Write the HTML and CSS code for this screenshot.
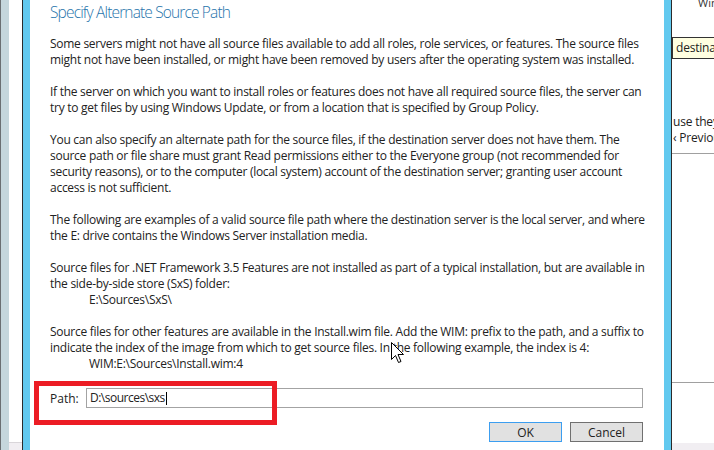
FILE: index.html
```html
<!DOCTYPE html>
<html>
<head>
	<title>Specify Alternate Source Path</title>
	<link rel="stylesheet" href="styles.css">
</head>
<body>
<div class="desk">
	<div class="edge">
		<div class="edge-line"></div>
		<div class="edge-fill"></div>
		<div class="edge-gap"><div class="edge-foot"></div></div>
	</div>
	<div class="dialog">
		<div class="dialog-body">
			<div class="title">Specify Alternate Source Path</div>
			<div class="text">
				<p>Some servers might not have all source files available to add all roles, role services, or features. The source files<br>might not have been installed, or might have been removed by users after the operating system was installed.</p>
				<p>If the server on which you want to install roles or features does not have all required source files, the server can<br>try to get files by using Windows Update, or from a location that is specified by Group Policy.</p>
				<p>You can also specify an alternate path for the source files, if the destination server does not have them. The<br>source path or file share must grant Read permissions either to the Everyone group (not recommended for<br>security reasons), or to the computer (local system) account of the destination server; granting user account<br>access is not sufficient.</p>
				<p>The following are examples of a valid source file path where the destination server is the local server, and where<br>the E: drive contains the Windows Server installation media.</p>
				<p>Source files for .NET Framework 3.5 Features are not installed as part of a typical installation, but are available in<br>the side-by-side store (SxS) folder:<br><span class="indent">E:\Sources\SxS\</span></p>
				<p>Source files for other features are available in the Install.wim file. Add the WIM: prefix to the path, and a suffix to<br>indicate the index of the image from which to get source files. In the following example, the index is 4:<br><span class="indent">WIM:E:\Sources\Install.wim:4</span></p>
			</div>
			<div class="path-row">
				<span class="path-label">Path:</span>
				<div class="path-input">D:\sources\sxs<span class="caret"></span></div>
			</div>
			<div class="buttons">
				<button type="button" class="btn btn-ok">OK</button>
				<button type="button" class="btn">Cancel</button>
			</div>
		</div>
	</div>
	<div class="behind">
		<div class="behind-top">Win</div>
		<div class="tip">destina</div>
		<div class="behind-text">
			<div class="cut">use they</div>
			<div class="cut">&lsaquo; Previou</div>
		</div>
		<div class="behind-rule"></div>
		<div class="behind-low"></div>
		<div class="behind-foot"></div>
	</div>
</div>
<div class="highlight"></div>
<svg class="pointer" width="13" height="22" viewBox="0 0 13 22">
	<path d="M0.5 0.5 L0.5 17.5 L4.5 13.5 L7.5 20.5 L10 19.5 L7 12.5 L12.5 12.5 Z" fill="#fff" stroke="#000" stroke-width="1"/>
</svg>
</body>
</html>
```

FILE: styles.css
```css
body {
	margin: 0;
	background: #fff;
	font-family: "Open Sans", "Noto Sans", sans-serif;
	font-size: 12px;
	color: #222;
	overflow: hidden;
}
.desk {
	display: flex;
	height: 450px;
}
.edge {
	display: flex;
	width: 22px;
}
.edge-line {
	width: 1px;
	background: #6b6f72;
}
.edge-fill {
	width: 8px;
	background: #c5d6dc;
}
.edge-gap {
	width: 13px;
	display: flex;
	flex-direction: column;
	justify-content: flex-end;
}
.edge-foot {
	height: 7px;
	background: #f1eef2;
	border-top: 1px solid #d9d6da;
}
.dialog {
	width: 634px;
	padding: 0 7px;
	background: #62c9ef;
	border-left: 1px solid #2b2b2b;
	border-right: 1px solid #2b2b2b;
}
.dialog-body {
	height: 100%;
	background: #fff;
	padding: 0 21px 0 20px;
	box-sizing: border-box;
}
.title {
	font-size: 15.5px;
	font-weight: 300;
	line-height: 24px;
	color: #1f74ab;
	letter-spacing: -0.85px;
	margin-bottom: 12px;
}
.text {
	line-height: 16px;
	white-space: nowrap;
	letter-spacing: -0.27px;
}
.text p {
	margin: 0 0 16px;
}
.text p:last-child {
	margin-bottom: 0;
}
.indent {
	padding-left: 39px;
}
.path-row {
	display: flex;
	align-items: center;
	margin-top: 16px;
	height: 20px;
}
.path-label {
	width: 36px;
}
.path-input {
	flex: 1;
	height: 20px;
	box-sizing: border-box;
	border: 1px solid #a3a3a3;
	padding: 0 3px;
	line-height: 18px;
	letter-spacing: -0.5px;
	display: flex;
	align-items: center;
}
.caret {
	width: 1px;
	height: 13px;
	background: #000;
	margin-left: 1px;
}
.buttons {
	display: flex;
	justify-content: flex-end;
	gap: 8px;
	margin-top: 14px;
}
.btn {
	width: 73px;
	height: 20px;
	padding: 0;
	border: 1px solid #707070;
	background: #e1e1e1;
	font-family: "Open Sans", "Noto Sans", sans-serif;
	font-size: 12px;
	color: #222;
}
.btn-ok {
	border-color: #3c9ef0;
}
.behind {
	flex: 1;
	position: relative;
	overflow: hidden;
	display: flex;
	flex-direction: column;
}
.behind-top {
	height: 12px;
	line-height: 6px;
	padding-left: 26px;
	font-size: 11px;
	color: #333;
	overflow: hidden;
}
.tip {
	margin-top: 25px;
	height: 22px;
	box-sizing: border-box;
	border: 1px solid #333;
	border-right: 0;
	background: #ffffe1;
	padding-left: 3px;
	line-height: 20px;
	color: #222;
	white-space: nowrap;
	letter-spacing: -0.2px;
}
.behind-text {
	margin-top: 55px;
	line-height: 16px;
	white-space: nowrap;
	letter-spacing: -0.2px;
}
.cut {
	padding-left: 1px;
	color: #222;
}
.behind-rule {
	margin-top: 7px;
	height: 1px;
	background: #a0a0a0;
}
.behind-low {
	flex: 1;
	border-bottom: 1px solid #a0a0a0;
	margin-bottom: 67px;
}
.behind-foot {
	position: absolute;
	left: 0;
	right: 0;
	bottom: 0;
	height: 7px;
	background: #f1eef2;
}
.highlight {
	position: absolute;
	left: 34px;
	top: 381px;
	width: 233px;
	height: 34px;
	border: 5px solid #ec1c24;
}
.pointer {
	position: absolute;
	left: 391px;
	top: 342px;
}
```
